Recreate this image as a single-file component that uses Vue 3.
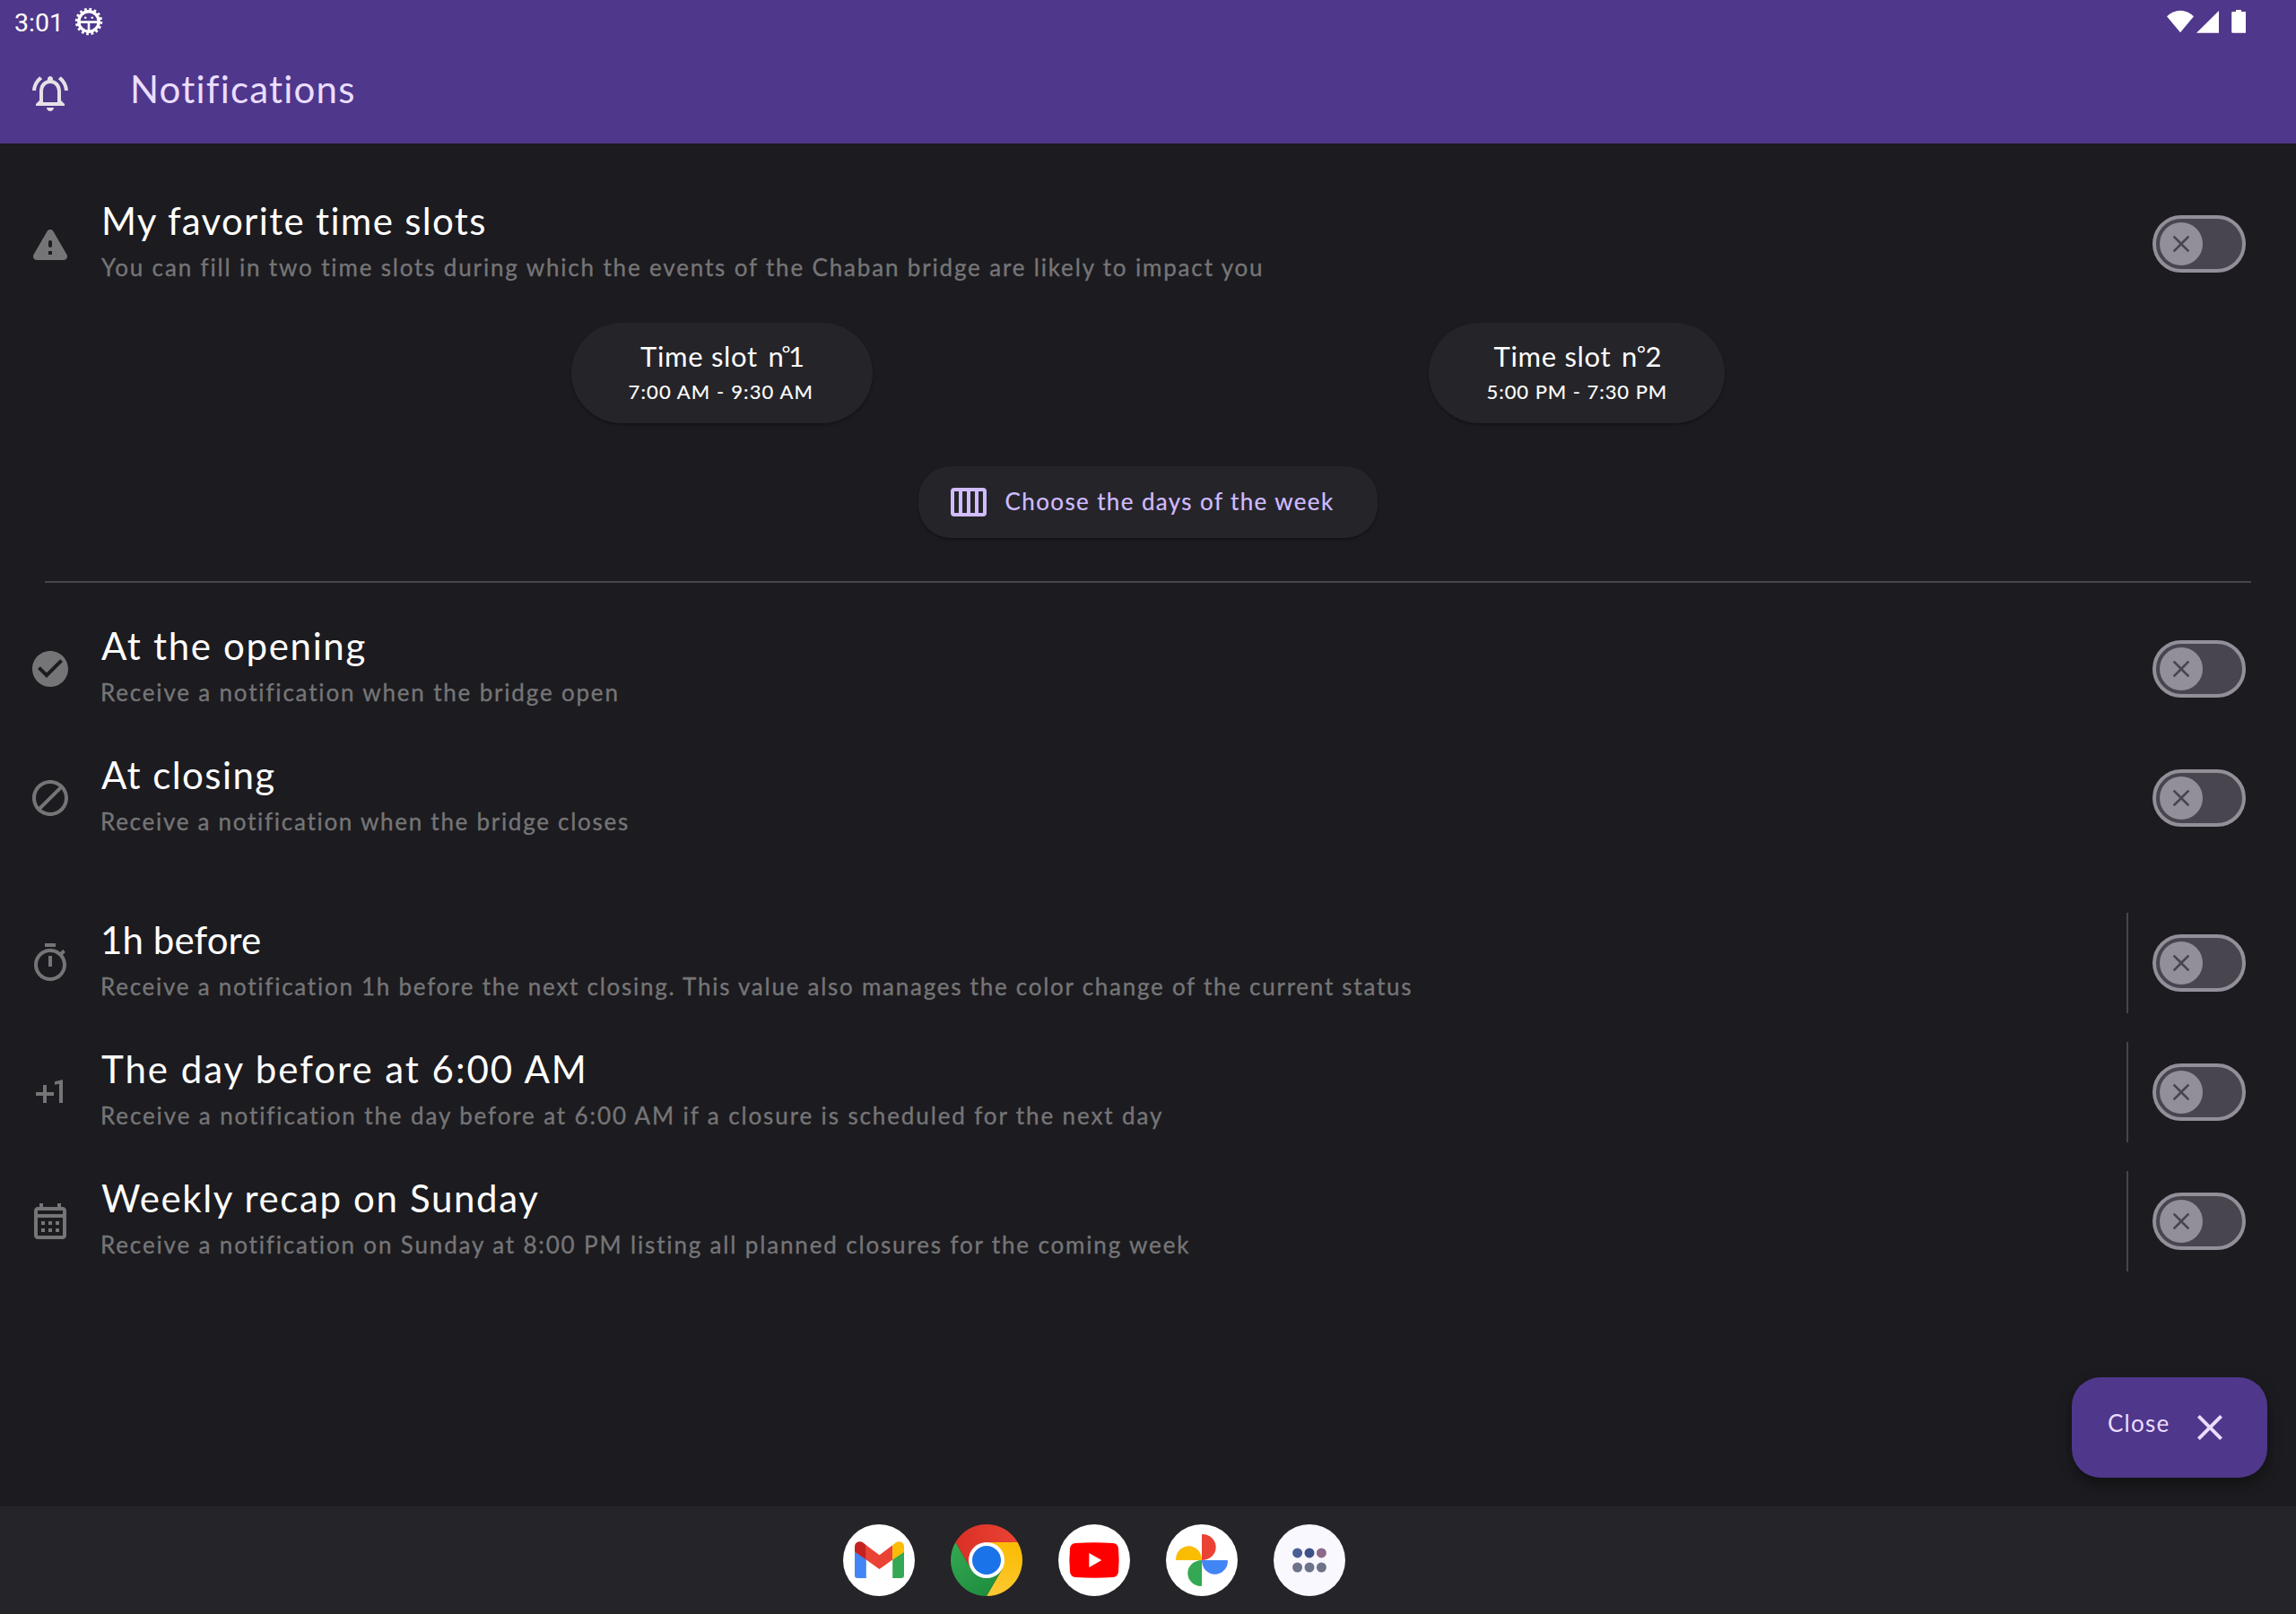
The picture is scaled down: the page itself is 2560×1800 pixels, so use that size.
<script setup>
const icons = {
  warning: 'M4.47 21h15.06c1.54 0 2.5-1.67 1.73-3L13.73 4.99c-.77-1.33-2.69-1.33-3.46 0L2.74 18c-.77 1.33.19 3 1.73 3zM12 14c-.55 0-1-.45-1-1v-2c0-.55.45-1 1-1s1 .45 1 1v2c0 .55-.45 1-1 1zm1 4h-2v-2h2v2z',
  check: 'M12 2C6.48 2 2 6.48 2 12s4.48 10 10 10 10-4.48 10-10S17.52 2 12 2zm-2 15l-5-5 1.41-1.41L10 14.17l7.59-7.59L19 8l-9 9z',
  block: 'M12 2C6.48 2 2 6.48 2 12s4.48 10 10 10 10-4.48 10-10S17.52 2 12 2zM4 12c0-4.42 3.58-8 8-8 1.85 0 3.55.63 4.9 1.69L5.69 16.9C4.63 15.55 4 13.85 4 12zm8 8c-1.85 0-3.55-.63-4.9-1.69L18.31 7.1C19.37 8.45 20 10.15 20 12c0 4.42-3.58 8-8 8z',
  timer: 'M15 1H9v2h6V1zm-4 13h2V8h-2v6zm8.03-6.61l1.42-1.42c-.43-.51-.9-.99-1.41-1.41l-1.42 1.42C16.07 4.74 14.12 4 12 4c-4.97 0-9 4.03-9 9s4.02 9 9 9 9-4.03 9-9c0-2.12-.74-4.07-1.97-5.61zM12 20c-3.87 0-7-3.13-7-7s3.13-7 7-7 7 3.13 7 7-3.13 7-7 7z',
  plusOne: 'M10 8H8v4H4v2h4v4h2v-4h4v-2h-4zm4.5-1.92V7.9l2.5-.5V18h2V5z',
  calendar: 'M19 4h-1V2h-2v2H8V2H6v2H5c-1.11 0-1.99.9-1.99 2L3 20c0 1.1.89 2 2 2h14c1.1 0 2-.9 2-2V6c0-1.1-.9-2-2-2zm0 16H5V10h14v10zm0-12H5V6h14v2zM9 14H7v-2h2v2zm4 0h-2v-2h2v2zm4 0h-2v-2h2v2zm-8 4H7v-2h2v2zm4 0h-2v-2h2v2zm4 0h-2v-2h2v2z',
  close: 'M19 6.41L17.59 5 12 10.59 6.41 5 5 6.41 10.59 12 5 17.59 6.41 19 12 13.41 17.59 19 19 17.59 13.41 12z'
}

const sections = [
  {
    id: 'favorite',
    rows: [
      { id: 'favorite', icon: icons.warning, title: 'My favorite time slots', text: 'You can fill in two time slots during which the events of the Chaban bridge are likely to impact you' }
    ]
  },
  {
    id: 'status',
    rows: [
      { id: 'opening', icon: icons.check, title: 'At the opening', text: 'Receive a notification when the bridge open' },
      { id: 'closing', icon: icons.block, title: 'At closing', text: 'Receive a notification when the bridge closes' }
    ]
  },
  {
    id: 'schedule',
    divided: true,
    rows: [
      { id: 'hour', icon: icons.timer, title: '1h before', text: 'Receive a notification 1h before the next closing. This value also manages the color change of the current status' },
      { id: 'day', icon: icons.plusOne, title: 'The day before at 6:00 AM', text: 'Receive a notification the day before at 6:00 AM if a closure is scheduled for the next day' },
      { id: 'week', icon: icons.calendar, title: 'Weekly recap on Sunday', text: 'Receive a notification on Sunday at 8:00 PM listing all planned closures for the coming week' }
    ]
  }
]

const slots = [
  { id: 1, hours: '7:00 AM - 9:30 AM' },
  { id: 2, hours: '5:00 PM - 7:30 PM' }
]
</script>

<template>
  <div class="screen">
    <header class="header">
      <div class="status-bar">
        <span class="clock">3:01</span>
        <svg class="debug" viewBox="0 0 32 32" fill="none" stroke="#fff">
          <circle cx="16" cy="16" r="11.2" stroke-width="3.4" />
          <circle cx="16" cy="16" r="13.6" stroke-width="3.2" stroke-dasharray="2.67 2.67" />
          <path d="M6 16.6h20M16 16v10" stroke-width="2.6" />
          <path d="M11 11.7h2.4M18.6 11.7H21" stroke-width="2" />
        </svg>
        <svg class="signals" viewBox="0 0 88 26" fill="#fff">
          <path d="M0 7.3C8.5-1.4 21.5-1.4 30 7.3L15 25.2z" />
          <path d="M33 25.8H58V1z" />
          <path d="M77 0h6v2h4a1.3 1.3 0 0 1 1.3 1.3v21.2a1.3 1.3 0 0 1-1.3 1.3H73.5a1.3 1.3 0 0 1-1.3-1.3V3.3A1.3 1.3 0 0 1 73.5 2H77z" />
        </svg>
      </div>
      <div class="app-bar">
        <svg class="icon" viewBox="0 0 24 24">
          <path d="M12 22c1.1 0 2-.9 2-2h-4c0 1.1.9 2 2 2zm6-6v-5c0-3.07-1.63-5.64-4.5-6.32V4c0-.83-.67-1.5-1.5-1.5s-1.5.67-1.5 1.5v.68C7.64 5.36 6 7.92 6 11v5l-2 2v1h16v-1l-2-2zm-2 1H8v-6c0-2.48 1.51-4.5 4-4.5s4 2.02 4 4.5v6zM7.58 4.08L6.15 2.65C3.75 4.48 2.17 7.3 2.03 10.5h2c.15-2.65 1.51-4.97 3.55-6.42zm12.39 6.42h2c-.15-3.2-1.73-6.02-4.12-7.85l-1.42 1.43c2.02 1.45 3.39 3.77 3.54 6.42z" />
        </svg>
        <h1 class="page-title">Notifications</h1>
      </div>
    </header>

    <main class="content">
      <template v-for="section in sections" :key="section.id">
        <section class="group" :class="{ divided: section.divided }">
          <div v-for="row in section.rows" :key="row.id" class="row" :class="'row-' + row.id">
            <svg class="icon" viewBox="0 0 24 24"><path :d="row.icon" /></svg>
            <div class="label">
              <h2 class="title">{{ row.title }}</h2>
              <p class="text">{{ row.text }}</p>
            </div>
            <div class="action">
              <div class="toggle">
                <span class="thumb">
                  <svg viewBox="0 0 24 24"><path :d="icons.close" /></svg>
                </span>
              </div>
            </div>
          </div>
        </section>

        <div v-if="section.id === 'favorite'" class="favorite-options">
          <div class="slots">
            <div v-for="slot in slots" :key="slot.id" class="slot" :class="'slot-' + slot.id">
              <div class="slot-name">Time slot <span class="slot-number">n<span class="degree">°</span>{{ slot.id }}</span></div>
              <div class="slot-hours">{{ slot.hours }}</div>
            </div>
          </div>
          <div class="days">
            <svg class="days-icon" viewBox="0 0 40 32">
              <path fill-rule="evenodd" d="M4 0h32a4 4 0 0 1 4 4v24a4 4 0 0 1-4 4H4a4 4 0 0 1-4-4V4a4 4 0 0 1 4-4zM4 4v24h5V4zM13 4v24h5V4zM22 4v24h5V4zM31 4v24h5V4z" />
            </svg>
            <span class="days-label">Choose the days of the week</span>
          </div>
          <hr class="separator" />
        </div>
      </template>
    </main>

    <div class="fab">
      <span class="fab-label">Close</span>
      <svg class="icon" viewBox="0 0 24 24"><path :d="icons.close" /></svg>
    </div>

    <nav class="taskbar">
      <svg class="app" viewBox="0 0 80 80">
        <circle cx="40" cy="40" r="40" fill="#fff" />
        <path d="M13 30.5L25.8 39V60H16a3 3 0 0 1-3-3z" fill="#4285f4" />
        <path d="M68 30.5L55.2 39V60H65a3 3 0 0 0 3-3z" fill="#34a853" />
        <path d="M25.8 23.2L40.5 34.2 55.2 23.2V39.4L40.5 50 25.8 39.4z" fill="#ea4335" />
        <path d="M13 30.7V25c0-5 5.5-7.3 9.5-4.4l3.3 2.6v16.2z" fill="#c5221f" />
        <path d="M68 30.7V25c0-5-5.5-7.3-9.5-4.4l-3.3 2.6v16.2z" fill="#fbbc04" />
      </svg>
      <svg class="app" viewBox="0 0 80 80">
        <defs>
          <linearGradient id="red" x1="0" x2="1"><stop stop-color="#d93025" /><stop offset="1" stop-color="#ea4335" /></linearGradient>
          <linearGradient id="yellow" x1=".3" y1="1" x2=".6" y2="0"><stop stop-color="#fcc934" /><stop offset="1" stop-color="#fbbc04" /></linearGradient>
          <linearGradient id="green" x1=".7" y1="1" x2=".1" y2="0"><stop stop-color="#1e8e3e" /><stop offset="1" stop-color="#34a853" /></linearGradient>
        </defs>
        <path d="M5.36 20A40 40 0 0 1 74.64 20H40L22.68 50z" fill="url(#red)" />
        <path d="M74.64 20A40 40 0 0 1 40 80L57.32 50 40 20z" fill="url(#yellow)" />
        <path d="M5.36 20A40 40 0 0 0 40 80L57.32 50H22.68z" fill="url(#green)" />
        <circle cx="40" cy="40" r="20" fill="#fff" />
        <circle cx="40" cy="40" r="16" fill="#1a73e8" />
      </svg>
      <svg class="app" viewBox="0 0 80 80">
        <circle cx="40" cy="40" r="40" fill="#fff" />
        <path d="M19 21Q40 19.4 61 21 66.3 21.4 67 27 68.3 40 67 53 66.3 58.6 61 59 40 60.3 19 59 13.7 58.6 13 53 11.7 40 13 27 13.7 21.4 19 21z" fill="red" />
        <path d="M34.3 32v16l14-8z" fill="#fff" />
      </svg>
      <svg class="app" viewBox="0 0 80 80">
        <circle cx="40" cy="40" r="40" fill="#fff" />
        <path d="M40 40V12a1 1 0 0 1 1-1C49 11 55.7 17.5 55.7 25.5S49 40 40 40z" fill="#ea4335" />
        <path d="M40 40H12a1 1 0 0 1-1-1C11 31 17.5 24.3 25.5 24.3S40 31 40 40z" fill="#fbbc04" />
        <path d="M40 40H68a1 1 0 0 1 1 1C69 49 62.5 55.7 54.5 55.7S40 49 40 40z" fill="#4285f4" />
        <path d="M40 40V68a1 1 0 0 1-1 1C31 69 24.3 62.5 24.3 54.5S31 40 40 40z" fill="#34a853" />
      </svg>
      <svg class="app" viewBox="0 0 80 80">
        <circle cx="40" cy="40" r="40" fill="#faf8ff" />
        <circle cx="26.6" cy="31.9" r="5.5" fill="#4a5f96" />
        <circle cx="40" cy="31.9" r="5.5" fill="#3f5288" />
        <circle cx="53.4" cy="31.9" r="5.5" fill="#8c6a8b" />
        <circle cx="26.6" cy="48" r="5.5" fill="#6d7388" />
        <circle cx="40" cy="48" r="5.5" fill="#6d7388" />
        <circle cx="53.4" cy="48" r="5.5" fill="#6d7388" />
      </svg>
    </nav>
  </div>
</template>

<style>
body {
  background: #1c1b1f;
}
</style>

<style scoped>
.screen {
  position: relative;
  display: flex;
  flex-direction: column;
  width: 2560px;
  height: 1800px;
  overflow: hidden;
  background: #1c1b1f;
  color: #fff;
  font-family: Lato, sans-serif;
  font-variant-ligatures: none;
  white-space: nowrap;
}

h1,
h2,
p {
  margin: 0;
  font-weight: 400;
}

svg {
  display: block;
  flex: none;
}

.icon {
  width: 48px;
  height: 48px;
  fill: currentColor;
}

.header {
  height: 160px;
  background: #4f378b;
}

.status-bar {
  display: flex;
  align-items: center;
  box-sizing: border-box;
  height: 48px;
  padding: 0 56px 0 16px;
}

.clock {
  width: 67px;
  padding-top: 3px;
  font: 28.5px/48px Roboto, sans-serif;
}

.debug {
  width: 32px;
  height: 32px;
}

.signals {
  width: 88px;
  height: 26px;
  margin-left: auto;
}

.app-bar {
  display: flex;
  align-items: center;
  height: 112px;
  padding-left: 32px;
  color: #e6e1e5;
}

.page-title {
  margin-left: 65px;
  padding-bottom: 10px;
  color: #eaddff;
  font-size: 42px;
  line-height: 56px;
  letter-spacing: 1.2px;
}

.content {
  flex: 1;
  padding-top: 40px;
}

.group + .group {
  margin-top: 40px;
}

.row {
  display: flex;
  align-items: center;
  box-sizing: border-box;
  height: 144px;
  padding: 0 56px 0 32px;
}

.row .icon {
  color: #757577;
}

.label {
  flex: 1;
  margin-left: 32px;
  padding-bottom: 8px;
}

.title {
  padding-left: 1px;
  font-size: 42px;
  line-height: 56px;
}

.text {
  margin-top: 4px;
  color: #757577;
  font-size: 26px;
  line-height: 40px;
}

.text {
  -webkit-text-stroke: 0.35px currentColor;
}

.row-favorite .title { letter-spacing: 1.33px; }
.row-favorite .text { padding-left: 1px; letter-spacing: 1.838px; }
.row-opening .title { letter-spacing: 1.66px; }
.row-opening .text { letter-spacing: 1.82px; }
.row-closing .title { letter-spacing: 1.42px; }
.row-closing .text { letter-spacing: 1.72px; }
.row-hour .title { padding-left: 0; letter-spacing: 0.1px; }
.row-hour .text { letter-spacing: 1.745px; }
.row-day .title { letter-spacing: 1.97px; }
.row-day .text { letter-spacing: 1.885px; }
.row-week .title { letter-spacing: 1.63px; }
.row-week .text { letter-spacing: 1.845px; }

.action {
  display: flex;
  align-items: center;
  height: 112px;
}

.divided .action {
  padding-left: 27px;
  border-left: 2px solid #49454f;
}

.toggle {
  display: flex;
  align-items: center;
  box-sizing: border-box;
  width: 104px;
  height: 64px;
  padding-left: 4px;
  border: 4px solid #938f99;
  border-radius: 32px;
  background: #49454f;
}

.thumb {
  display: flex;
  align-items: center;
  justify-content: center;
  width: 48px;
  height: 48px;
  border-radius: 50%;
  background: #938f99;
}

.thumb svg {
  width: 32px;
  height: 32px;
  fill: #49454f;
}

.favorite-options {
  display: flex;
  flex-direction: column;
  align-items: center;
  height: 330px;
}

.slots {
  display: flex;
  align-self: stretch;
  justify-content: space-between;
  padding: 16px 637px 0;
}

.slot {
  box-sizing: border-box;
  height: 112px;
  padding: 17px 0 0 63.5px;
  border-radius: 56px;
  background: #252429;
  box-shadow: 0 2px 3px rgba(0, 0, 0, 0.3);
}

.slot-1 { width: 335.5px; }
.slot-2 { width: 330px; }

.slot-name {
  height: 40px;
  font-size: 31px;
  line-height: 40px;
  letter-spacing: 0.7px;
}

.degree {
  font-size: 24px;
  line-height: 0;
  vertical-align: 6px;
}

.slot-1 .slot-name { padding-left: 13.5px; }
.slot-2 .slot-name { padding-left: 9px; }
.slot-number { padding-left: 3px; }
.slot-1 .slot-number { letter-spacing: -2.4px; }
.slot-2 .slot-number { letter-spacing: -0.4px; }

.slot-hours {
  margin-top: 6px;
  font-size: 22px;
  line-height: 28px;
  -webkit-text-stroke: 0.15px currentColor;
}

.slot-1 .slot-hours { letter-spacing: 1.12px; }
.slot-2 .slot-hours { padding-left: 1px; letter-spacing: 0.95px; }

.days {
  display: flex;
  align-items: center;
  box-sizing: border-box;
  width: 512px;
  height: 80px;
  margin-top: 48px;
  padding-left: 36px;
  border-radius: 36px;
  background: #252429;
  box-shadow: 0 2px 3px rgba(0, 0, 0, 0.3);
  color: #d0bcff;
}

.days-icon {
  width: 40px;
  height: 32px;
  fill: currentColor;
}

.days-label {
  margin-left: 20.5px;
  padding-bottom: 2px;
  font-size: 26px;
  line-height: 40px;
  letter-spacing: 1.38px;
  -webkit-text-stroke: 0.2px currentColor;
}

.separator {
  width: 2460px;
  height: 2px;
  margin: 48px 0 0;
  border: 0;
  background: #49454f;
}

.fab {
  position: absolute;
  right: 32px;
  bottom: 152px;
  display: flex;
  align-items: center;
  justify-content: space-between;
  box-sizing: border-box;
  width: 218px;
  height: 112px;
  padding: 0 40px;
  border-radius: 32px;
  background: #4f378b;
  box-shadow: 0 6px 16px rgba(0, 0, 0, 0.3), 0 10px 12px -4px rgba(0, 0, 0, 0.12);
  color: #eaddff;
}

.fab-label {
  padding-bottom: 10px;
  font-size: 26px;
  line-height: 40px;
  letter-spacing: 1.25px;
}

.taskbar {
  position: relative;
  display: flex;
  gap: 40px;
  box-sizing: border-box;
  height: 120px;
  padding: 20px 0 0 940px;
  background: #252429;
}

.app {
  width: 80px;
  height: 80px;
}
</style>
